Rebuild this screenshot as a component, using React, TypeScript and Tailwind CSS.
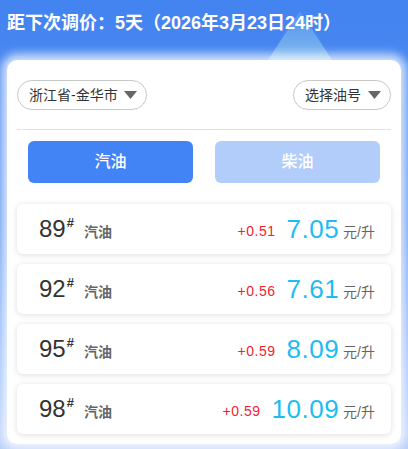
const prices = [
  { grade: '89', diff: '+0.51', price: '7.05' },
  { grade: '92', diff: '+0.56', price: '7.61' },
  { grade: '95', diff: '+0.59', price: '8.09' },
  { grade: '98', diff: '+0.59', price: '10.09' },
];

function Caret() {
  return (
    <svg width="13" height="8" viewBox="0 0 13 8" className="shrink-0">
      <path d="M0 0 H13 L6.5 8 Z" fill="#666" />
    </svg>
  );
}

export default function App() {
  return (
    <div
      className="relative w-[408px] h-[449px] overflow-hidden bg-gradient-to-b from-[#4283f0] via-[#5a92f3] to-[#b9d0fb] font-['Liberation_Sans','Noto_Sans_CJK_SC',sans-serif]"
    >
      <svg className="absolute left-[266px] top-[9px]" width="68" height="54" viewBox="0 0 68 54">
        <defs>
          <linearGradient id="tri" x1="0" y1="0" x2="0" y2="1">
            <stop offset="0" stopColor="#8cc4ee" stopOpacity="0.2" />
            <stop offset="1" stopColor="#8cc4ee" stopOpacity="0.85" />
          </linearGradient>
        </defs>
        <path d="M34 2 L68 54 H0 Z" fill="url(#tri)" />
      </svg>

      <div className="relative h-[60px] px-[7px] pt-[11px] text-[18px] font-bold leading-[24px] text-white">
        距下次调价：5天（2026年3月23日24时）
      </div>

      <div className="relative mx-[7px] rounded-[10px] bg-white px-[10px] pt-[20px] pb-[10px] shadow-[0_0_10px_6px_rgba(255,255,255,0.75)]">
        <div className="flex items-center justify-between">
          <div className="flex h-[30px] w-[130px] items-center justify-between whitespace-nowrap rounded-full border border-[#c8c8c8] pl-[11px] pr-[9px] text-[14px] text-[#333]">
            <span>浙江省-金华市</span>
            <Caret />
          </div>
          <div className="flex h-[30px] w-[98px] items-center justify-between whitespace-nowrap rounded-full border border-[#c8c8c8] pl-[11px] pr-[9px] text-[14px] text-[#333]">
            <span>选择油号</span>
            <Caret />
          </div>
        </div>

        <div className="mt-[19px] h-px bg-[#e3e3e3]" />

        <div className="mt-[11px] flex justify-between px-[11px]">
          <div className="flex h-[42px] w-[165px] items-center justify-center rounded-[6px] bg-[#4284f5] text-[16px] font-medium text-white">
            汽油
          </div>
          <div className="flex h-[42px] w-[165px] items-center justify-center rounded-[6px] bg-[#b2cdfa] text-[16px] font-medium text-white">
            柴油
          </div>
        </div>

        <div className="mt-[21px] flex flex-col gap-[10px]">
          {prices.map((p) => (
            <div
              key={p.grade}
              className="flex h-[50px] items-center justify-between rounded-[6px] bg-white pl-[22px] pr-[16px] shadow-[0_1px_6px_rgba(0,0,0,0.13)]"
            >
              <div className="flex items-center">
                <span className="text-[24px] leading-none text-[#333]">{p.grade}</span>
                <span className="mb-[12px] ml-[1px] text-[13px] font-bold text-[#333]">#</span>
                <span className="ml-[10px] mt-[6px] text-[14px] font-bold text-[#666]">汽油</span>
              </div>
              <div className="flex items-center">
                <span className="mt-[4px] text-[14px] tracking-[0.5px] text-[#f5222d]">{p.diff}</span>
                <span className="ml-[11px] text-[26px] leading-none tracking-[0.5px] text-[#1fbcf2]">{p.price}</span>
                <span className="ml-[4px] mt-[6px] text-[14px] text-[#666]">元/升</span>
              </div>
            </div>
          ))}
        </div>
      </div>
    </div>
  );
}
